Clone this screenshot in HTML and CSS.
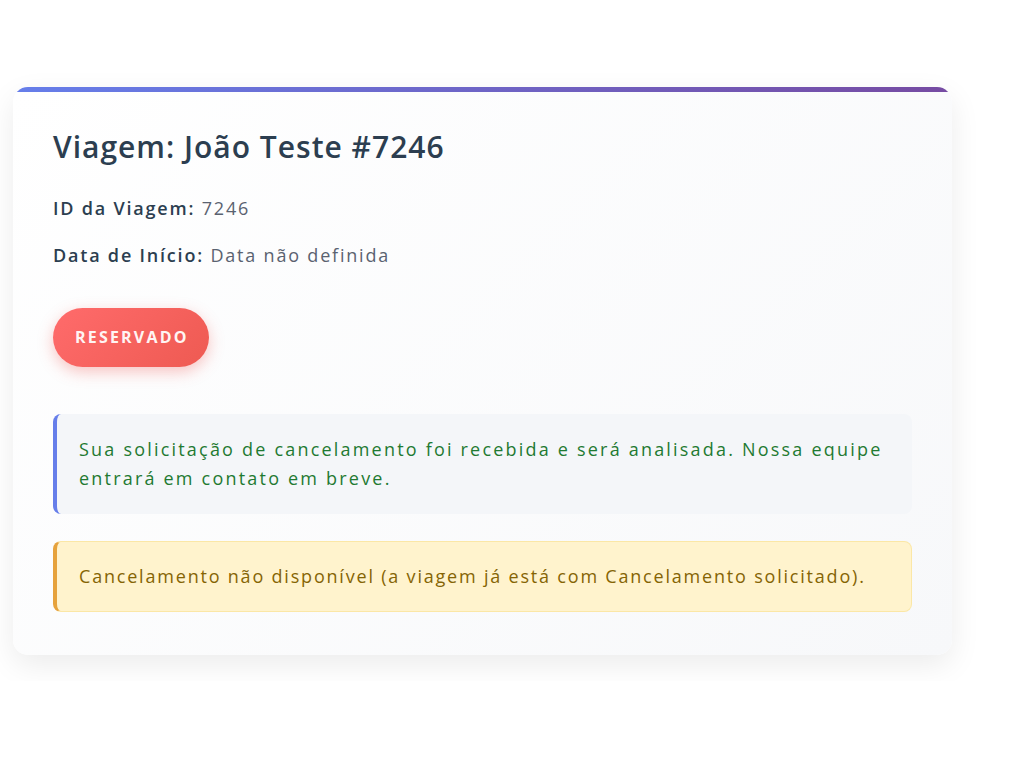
FILE: index.html
```html
<!DOCTYPE html>
<html lang="pt-BR">
<head>
<meta charset="utf-8">
<title>Viagem: João Teste #7246</title>
<link rel="stylesheet" href="styles.css">
</head>
<body>
<div class="page">
  <div class="card">
    <h1 class="title">Viagem: João Teste #7246</h1>
    <p class="row"><strong>ID da Viagem:</strong> 7246</p>
    <p class="row"><strong>Data de Início:</strong> Data não definida</p>
    <div class="status">RESERVADO</div>
    <div class="alert alert-info">Sua solicitação de cancelamento foi recebida e será analisada. Nossa equipe entrará em contato em breve.</div>
    <div class="alert alert-warning">Cancelamento não disponível (a viagem já está com Cancelamento solicitado).</div>
  </div>
</div>
</body>
</html>
```
FILE: styles.css
```css
* { box-sizing: border-box; }
body {
  margin: 0;
  background: #ffffff;
  font-family: "Open Sans", "Noto Sans", sans-serif;
}
.page {
  overflow: hidden;
  padding: 87px 72px 26px 13px;
}
.card {
  position: relative;
  overflow: hidden;
  width: 939px;
  background: linear-gradient(135deg, #ffffff 0%, #f7f8fa 100%);
  border-radius: 15px;
  box-shadow: 0 10px 30px rgba(0, 0, 0, 0.08);
  padding: 43px 40px 43px 40px;
}
.card::before {
  content: "";
  position: absolute;
  left: 0;
  right: 0;
  top: 0;
  height: 5px;
  background: linear-gradient(90deg, #667eea, #764ba2);
}
.title {
  margin: 0 0 31px 0;
  font-size: 30px;
  line-height: 34px;
  font-weight: 600;
  letter-spacing: 1px;
  color: #2c3e50;
}
.row {
  margin: 0 0 20px 0;
  font-size: 18px;
  line-height: 27px;
  letter-spacing: 1.8px;
  color: #5a6270;
}
.row strong {
  font-weight: 600;
  color: #2c3e50;
}
.status {
  display: inline-block;
  margin-top: 19px;
  margin-bottom: 47px;
  padding: 19px 20px 19px 22px;
  font-size: 16px;
  line-height: 21px;
  font-weight: 700;
  letter-spacing: 2.2px;
  color: #fff4f3;
  background: linear-gradient(135deg, #ff6b6b, #ee5a52);
  border-radius: 30px;
  box-shadow: 0 5px 15px rgba(238, 90, 82, 0.35);
}
.alert {
  font-size: 18px;
  line-height: 29px;
  letter-spacing: 1.8px;
  border-radius: 8px;
}
.alert-info {
  margin-bottom: 27px;
  padding: 21px 25px 21px 22px;
  background: #f4f6f9;
  border-left: 4px solid #667eea;
  color: #1f7a32;
  letter-spacing: 2.2px;
}
.alert-warning {
  padding: 20px 25px 20px 22px;
  background: #fff3cd;
  border: 1px solid #fbe7a6;
  border-left: 4px solid #e6a23c;
  color: #856404;
}
```
